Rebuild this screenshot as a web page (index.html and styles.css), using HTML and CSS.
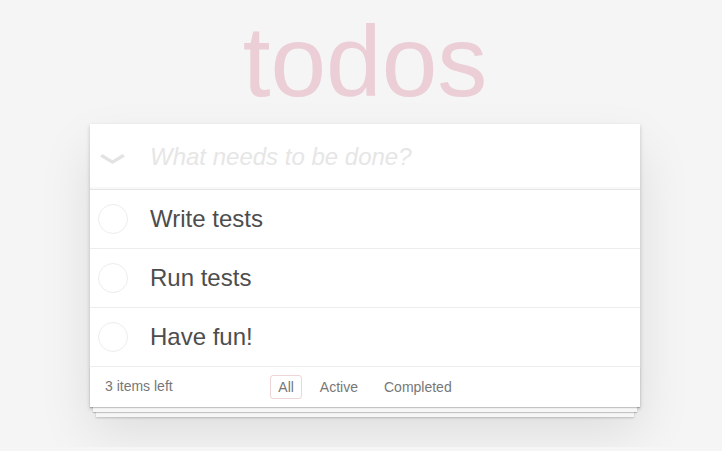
FILE: index.html
```html
<!DOCTYPE html>
<html lang="en">
<head>
<meta charset="utf-8">
<title>todos</title>
<link rel="stylesheet" href="styles.css">
</head>
<body>
<section class="todoapp">
  <h1 class="title">todos</h1>
  <div class="card">
    <header class="entry">
      <span class="toggle-all">
        <svg width="25" height="10" viewBox="0 0 25 10"><polygon points="0,2.4 2.4,0 12.5,6.2 22.6,0 25,2.4 12.5,10" fill="#e3e3e3"/></svg>
      </span>
      <input class="new-todo" placeholder="What needs to be done?">
    </header>
    <ul class="todo-list">
      <li class="todo"><span class="check"></span><span class="label">Write tests</span></li>
      <li class="todo"><span class="check"></span><span class="label">Run tests</span></li>
      <li class="todo"><span class="check"></span><span class="label">Have fun!</span></li>
    </ul>
    <footer class="footer">
      <span class="count">3 items left</span>
      <ul class="filters">
        <li><a class="filter selected">All</a></li>
        <li><a class="filter">Active</a></li>
        <li><a class="filter">Completed</a></li>
      </ul>
      <span></span>
    </footer>
  </div>
</section>
</body>
</html>
```
FILE: styles.css
```css
html, body { margin: 0; padding: 0; }
body {
  background: #f5f5f5;
  font-family: "Liberation Sans", Arial, sans-serif;
  font-size: 14px;
  line-height: 1.4em;
  color: #4d4d4d;
  padding-left: 8px;
  padding-bottom: 40px;
}
.todoapp {
  width: 550px;
  margin: 0 auto;
}
.title {
  margin: 4px 0 5px;
  height: 115px;
  font-size: 100px;
  line-height: 115px;
  font-weight: normal;
  text-align: center;
  color: #ebced6;
}
.card {
  background: #fff;
  box-shadow: 0 2px 4px rgba(0,0,0,0.2), 0 25px 50px rgba(0,0,0,0.1);
}
.entry {
  display: flex;
  align-items: center;
  height: 65px;
  box-shadow: inset 0 -2px 1px rgba(0,0,0,0.03);
  border-bottom: 1px solid #e6e6e6;
}
.toggle-all {
  width: 60px;
  flex: none;
  display: flex;
  padding-left: 10px;
  padding-top: 5px;
  box-sizing: border-box;
}
.new-todo {
  flex: 1;
  border: none;
  outline: none;
  padding: 0 16px 0 0;
  font-family: inherit;
  font-size: 24px;
  line-height: 33px;
  height: 34px;
  color: #4d4d4d;
  background: transparent;
}
.new-todo::placeholder {
  font-style: italic;
  color: #e6e6e6;
}
.todo-list {
  list-style: none;
  margin: 0;
  padding: 0;
}
.todo {
  display: flex;
  align-items: center;
  height: 58px;
  border-bottom: 1px solid #ededed;
  font-size: 24px;
}
.check {
  width: 28px;
  height: 28px;
  border: 1px solid #ededed;
  border-radius: 50%;
  margin-left: 8px;
  margin-right: 22px;
  flex: none;
}
.label {
  line-height: 1.2;
  color: #4d4d4d;
}
.footer {
  display: grid;
  grid-template-columns: 1fr auto 1fr;
  align-items: center;
  height: 40px;
  padding: 0 15px;
  color: #777;
  box-shadow: 0 1px 1px rgba(0,0,0,0.2), 0 8px 0 -3px #f6f6f6, 0 9px 1px -3px rgba(0,0,0,0.2), 0 16px 0 -6px #f6f6f6, 0 17px 2px -6px rgba(0,0,0,0.2);
}
.count { text-align: left; }
.filters {
  list-style: none;
  margin: 0;
  padding: 0;
  display: flex;
  gap: 4px;
}
.filter {
  display: block;
  margin: 3px;
  padding: 3px 7px;
  border: 1px solid transparent;
  border-radius: 3px;
  color: inherit;
  line-height: 1.2;
}
.filter.selected {
  border-color: rgba(175, 47, 47, 0.2);
}
```
